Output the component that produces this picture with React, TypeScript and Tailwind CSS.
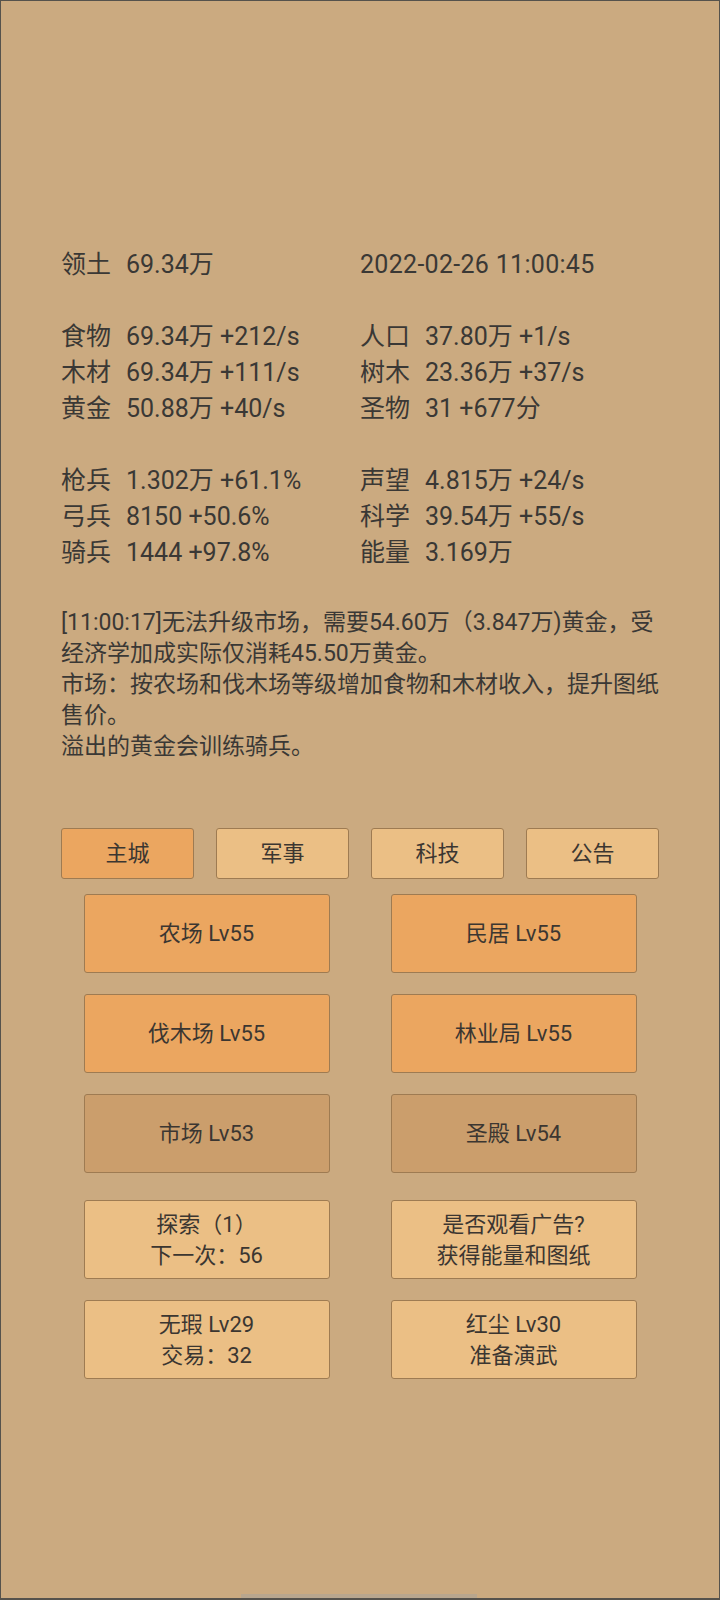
import React from "react";

const stats: [string, string, string, string][] = [
  ["领土", "69.34万", "", "2022-02-26 11:00:45"],
  ["", "", "", ""],
  ["食物", "69.34万 +212/s", "人口", "37.80万 +1/s"],
  ["木材", "69.34万 +111/s", "树木", "23.36万 +37/s"],
  ["黄金", "50.88万 +40/s", "圣物", "31 +677分"],
  ["", "", "", ""],
  ["枪兵", "1.302万 +61.1%", "声望", "4.815万 +24/s"],
  ["弓兵", "8150 +50.6%", "科学", "39.54万 +55/s"],
  ["骑兵", "1444 +97.8%", "能量", "3.169万"],
];

const messageLines = [
  "[11:00:17]无法升级市场，需要54.60万（3.847万)黄金，受",
  "经济学加成实际仅消耗45.50万黄金。",
  "市场：按农场和伐木场等级增加食物和木材收入，提升图纸",
  "售价。",
  "溢出的黄金会训练骑兵。",
];

const tabs = ["主城", "军事", "科技", "公告"];

const Stat: React.FC<{ label: string; value: string }> = ({ label, value }) => (
  <div className="flex h-[36px] items-center whitespace-nowrap">
    {label && <span className="w-[65px] shrink-0">{label}</span>}
    <span className={label ? "" : "tracking-[0.3px]"}>{value}</span>
  </div>
);

const Building: React.FC<{ lines: string[]; tone: "orange" | "dark" | "light" }> = ({
  lines,
  tone,
}) => {
  const bg =
    tone === "orange"
      ? "bg-[#EBA660]"
      : tone === "dark"
      ? "bg-[#CB9E6C]"
      : "bg-[#EBBF85]";
  return (
    <button
      className={`${bg} h-[79px] rounded-[3px] border border-[#9E7B52] flex flex-col items-center justify-center text-[22px] leading-[31px] text-[#3B3631]`}
    >
      {lines.map((l) => (
        <span key={l}>{l}</span>
      ))}
    </button>
  );
};

const App: React.FC = () => {
  return (
    <div
      className="relative w-[720px] h-[1600px] bg-[#CBAA80] border border-[#55524C] border-b-2 text-[#3A3835] overflow-hidden"
      style={{ fontFamily: 'Roboto, "Noto Sans CJK SC", sans-serif' }}
    >
      <div className="pt-[246px] px-[60px]">
        {/* stats */}
        <div className="grid grid-cols-2 text-[25px]">
          {stats.map((row, i) => (
            <React.Fragment key={i}>
              <Stat label={row[0]} value={row[1]} />
              <Stat label={row[2]} value={row[3]} />
            </React.Fragment>
          ))}
        </div>

        {/* log */}
        <div className="mt-[36px] text-[23px] leading-[31px] whitespace-nowrap">
          {messageLines.map((l) => (
            <div key={l}>{l}</div>
          ))}
        </div>

        {/* tabs */}
        <div className="mt-[66px] grid grid-cols-4 gap-[22px] w-[598px]">
          {tabs.map((t, i) => (
            <button
              key={t}
              className={`h-[51px] rounded-[3px] border border-[#9E7B52] text-[22px] text-[#3B3631] ${
                i === 0 ? "bg-[#EBA660]" : "bg-[#EBBF85]"
              }`}
            >
              {t}
            </button>
          ))}
        </div>
      </div>

      {/* buildings */}
      <div className="mx-auto mt-[15px] w-[553px] grid grid-cols-2 gap-x-[61px]">
        <div className="col-span-2 grid grid-cols-2 gap-x-[61px] gap-y-[21px]">
          <Building lines={["农场 Lv55"]} tone="orange" />
          <Building lines={["民居 Lv55"]} tone="orange" />
          <Building lines={["伐木场 Lv55"]} tone="orange" />
          <Building lines={["林业局 Lv55"]} tone="orange" />
          <Building lines={["市场 Lv53"]} tone="dark" />
          <Building lines={["圣殿 Lv54"]} tone="dark" />
        </div>
        <div className="col-span-2 mt-[27px] grid grid-cols-2 gap-x-[61px] gap-y-[21px]">
          <Building lines={["探索（1）", "下一次：56"]} tone="light" />
          <Building lines={["是否观看广告?", "获得能量和图纸"]} tone="light" />
          <Building lines={["无瑕 Lv29", "交易：32"]} tone="light" />
          <Building lines={["红尘 Lv30", "准备演武"]} tone="light" />
        </div>
      </div>

      {/* scroll indicator */}
      <div className="absolute bottom-0 left-[240px] w-[236px] h-[4px] bg-[#B8A68E]" />
    </div>
  );
};

export default App;
